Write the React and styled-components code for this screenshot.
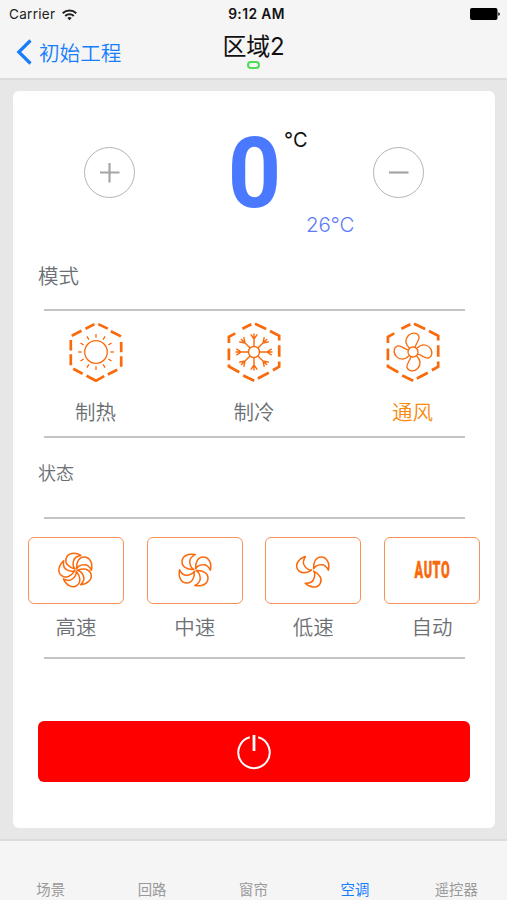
import React, {useState} from 'react';
import styled, {createGlobalStyle} from 'styled-components';

const GlobalStyle = createGlobalStyle`
  * {
    box-sizing: border-box;
  }
  body {
    margin: 0;
    background: #e7e7e7;
    font-family: Inter, "Noto Sans CJK SC", sans-serif;
  }
  button {
    padding: 0;
    border: none;
    background: none;
    font: inherit;
    cursor: pointer;
  }
  svg {
    display: block;
  }
`;

const Screen = styled.div`
  display: flex;
  flex-direction: column;
  width: 507px;
  height: 900px;
  overflow: hidden;
`;

const Header = styled.header`
  height: 80px;
  background: #f5f5f5;
  border-bottom: 2px solid #dcdcdc;
`;

const StatusBar = styled.div`
  display: grid;
  grid-template-columns: 1fr auto 1fr;
  align-items: center;
  height: 27px;
  padding: 0 7px 0 9px;
  font-size: 13.5px;
  line-height: 27px;
  color: #222;
`;

const Carrier = styled.div`
  display: flex;
  align-items: center;
  gap: 7px;
  padding-top: 1px;
  letter-spacing: .3px;
`;

const Clock = styled.div`
  padding: 1px 0 0 4px;
  font-weight: 600;
  font-size: 13.8px;
  letter-spacing: .4px;
  color: #111;
`;

const Battery = styled.svg`
  justify-self: end;
`;

const NavBar = styled.nav`
  display: grid;
  grid-template-columns: 1fr auto 1fr;
  height: 51px;
  padding: 0 16px;
`;

const Back = styled.button`
  display: flex;
  align-items: center;
  gap: 7px;
  height: 50px;
  font-family: "Noto Sans CJK SC", sans-serif;
  font-size: 20.6px;
  font-weight: 350;
  color: #157efb;
`;

const Title = styled.h1`
  display: flex;
  flex-direction: column;
  align-items: center;
  gap: 0;
  margin: 5px 0 0;
  font-size: 24px;
  font-weight: 400;
  line-height: 29px;
  letter-spacing: -.2px;
  color: #111;
`;

const OnlineMark = styled.span`
  width: 13px;
  height: 8px;
  border: 2px solid #4cdd54;
  border-radius: 4px;
`;

const Card = styled.main`
  display: flex;
  flex-direction: column;
  height: 737px;
  margin: 11px 12px 11px 13px;
  background: #fff;
  border-radius: 6px;
`;

const Temperature = styled.section`
  display: grid;
  grid-template-columns: 51px 1fr 51px;
  align-items: start;
  height: 156px;
  padding: 0 71px;
`;

const RoundButton = styled.button`
  display: flex;
  align-items: center;
  justify-content: center;
  width: 51px;
  height: 51px;
  margin-top: 56px;
  border: 1.5px solid #b4b4b4;
  border-radius: 50%;
`;

const Reading = styled.div`
  display: grid;
  grid-template-columns: 57px auto;
  justify-content: start;
  padding: 30px 0 0 91px;
`;

const Current = styled.div`
  height: 90px;
  font-family: Roboto, sans-serif;
  font-size: 99px;
  font-weight: 700;
  line-height: 104px;
  text-align: center;
  color: #4a78ff;
  transform: scaleX(.94);
`;

const Unit = styled.div`
  padding: 5px 0 0 1px;
  font-size: 20px;
  line-height: 28px;
  color: #111;
`;

const Target = styled.div`
  grid-column: 1 / -1;
  padding-left: 80px;
  font-size: 20.5px;
  font-weight: 300;
  line-height: 28px;
  letter-spacing: -.2px;
  color: #5b7cf5;
`;

const SectionTitle = styled.h2`
  margin: 0;
  padding: ${props => props.$pad};
  font-size: ${props => props.$size};
  font-weight: 350;
  line-height: 30px;
  font-family: "Noto Sans CJK SC", sans-serif;
  color: #6c7074;
`;

const Modes = styled.section`
  display: grid;
  grid-template-columns: repeat(3, 104px);
  justify-content: space-between;
  height: 129px;
  margin: 0 30.5px;
  padding-top: 11px;
  border-top: 2px solid #c4c4c4;
  border-bottom: 2px solid #c4c4c4;
`;

const Option = styled.button`
  display: flex;
  flex-direction: column;
  align-items: center;
  height: fit-content;
`;

const Label = styled.span`
  font-family: "Noto Sans CJK SC", sans-serif;
  font-size: 20.5px;
  font-weight: 350;
  line-height: 30px;
  color: ${props => props.$active ? '#f98a0e' : '#6c7074'};
`;

const ModeLabel = styled(Label)`
  margin-top: 14px;
`;

const Divider = styled.hr`
  width: 421px;
  height: 2px;
  margin: 0 0 0 30.5px;
  border: none;
  background: #c4c4c4;
`;

const Speeds = styled.section`
  display: grid;
  grid-template-columns: repeat(4, 96px);
  justify-content: space-between;
  height: 138px;
  padding: 18px 15px 0;
`;

const SpeedBox = styled.span`
  display: flex;
  align-items: center;
  justify-content: center;
  width: 96px;
  height: 67px;
  padding-bottom: 2px;
  margin-bottom: 7px;
  border: 1.5px solid #f9915a;
  border-radius: 6px;
`;

const Auto = styled.span`
  padding-top: 2px;
  font-family: Roboto, sans-serif;
  font-size: 23px;
  font-weight: 900;
  line-height: 30px;
  letter-spacing: 1px;
  color: #f96a0c;
  -webkit-text-stroke: .4px #f96a0c;
  transform: scaleX(.55);
`;

const Power = styled.button`
  display: flex;
  align-items: center;
  justify-content: center;
  height: 61px;
  margin: 62px 25px 0;
  background: #fe0000;
  border-radius: 6px;
`;

const TabBar = styled.footer`
  display: grid;
  grid-template-columns: repeat(5, 1fr);
  height: 61px;
  background: #f5f5f5;
  border-top: 2px solid #dcdcdc;
`;

const Tab = styled.button`
  padding: 39px 0 0;
  font-size: 14.4px;
  line-height: 20px;
  color: ${props => props.$active ? '#157efb' : '#999'};
`;

const ORANGE = '#f96a0c';

const range = n => Array.from({length: n}, (_, i) => i);

const WifiIcon = () => (
  <svg width="15" height="12" viewBox="0 0 15 12" fill="none" stroke="#222" strokeWidth="1.9">
    <path d="M.7 4.2a9.8 9.8 0 0 1 13.6 0"/>
    <path d="M3.2 7a6.2 6.2 0 0 1 8.6 0"/>
    <path d="M7.5 11.2 5.3 9a3.2 3.2 0 0 1 4.4 0z" fill="#222" stroke="none"/>
  </svg>
);

const BatteryIcon = () => (
  <Battery width="30" height="12" viewBox="0 0 30 12">
    <rect x="0" y="0" width="27.5" height="12" rx="2"/>
    <path d="M28.3 4.2q1.6.4 1.6 1.8t-1.6 1.8z"/>
  </Battery>
);

const SunFigure = () => (
  <g strokeWidth="1.3">
    <circle r="11.3"/>
    {range(12).map(i => <path key={i} d="M0-14.3v-3.7" transform={`rotate(${i * 30})`}/>)}
  </g>
);

const SnowFigure = () => (
  <g strokeWidth="1.4">
    <circle r="5.5"/>
    {range(8).map(i => (
      <path key={i} d="M0-5.5v-13M0-12.8l-3.2-4.9M0-12.8l3.2-4.9" transform={`rotate(${i * 45})`}/>
    ))}
  </g>
);

const FanFigure = () => (
  <g strokeWidth="1.3">
    <circle r="5"/>
    {range(4).map(i => (
      <path
        key={i}
        d="M-3.6-3.8C-8-8.5-8.4-12.5-4.6-16.5-1-20.2 4.6-19.3 6-15.6 7-11.6 3-9.4 2.2-4.8"
        transform={`rotate(${i * 90})`}
      />
    ))}
  </g>
);

const frames = {
  plain: 'M5.8 13.8 15.5 8.8M19.5 6.7l9-4.6M32.2 2.1l9.6 4.5M44.8 9.2l10.2 5.2M55.2 20v10.2M55.2 34.2v10.6M4.8 18v10.4M4.8 32.2v11M7.2 46.8l9.4 5M20.5 53.8l9.4 5 8.3-4.7M41.8 52.5l9.4-4.7',
  corner: 'M4.9 21v-6.2l6.4-3.4M18.4 6.7l9-4.4M31 1.8l11.2 5.2M46 9l9.2 4.8V18.6M55.2 23.2v11.6M55.2 39.4v5.4l-6.3 3.4M44.8 50.8l-11 5.7M30.2 58.7 19.2 53.5M15.3 50.2 4.9 44.4V42.6M4.9 26.5v11.7',
};

const HexIcon = ({frame, children}) => (
  <svg width="60" height="60" viewBox="0 0 60 60" fill="none" stroke={ORANGE}>
    <path d={frames[frame]} strokeWidth="2.7"/>
    <g transform="translate(30 30)">{children}</g>
  </svg>
);

const BladesIcon = ({count}) => (
  <svg width="38" height="38" viewBox="-19 -19 38 38" fill="none" stroke={ORANGE} strokeWidth="1.5" strokeLinejoin="round">
    {range(count).map(i => (
      <path
        key={i}
        d="M.6-1.2C.2-8 3-13 8.2-13 13.8-13 17-7 15.4.2 13.6-3.4 11-5.6 7.8-5.2 4.6-5 2-3.6.6-1.2z"
        transform={`rotate(${i * -360 / count})`}
      />
    ))}
  </svg>
);

const PowerIcon = () => (
  <svg width="36" height="36" viewBox="0 0 36 36" fill="none" stroke="#fff" strokeWidth="2">
    <path d="M13.8 3.3a15.7 15.7 0 1 0 8.4 0"/>
    <path d="M18 1v16" strokeWidth="2.8"/>
  </svg>
);

const modes = [
  {name: '制热', frame: 'plain', Figure: SunFigure},
  {name: '制冷', frame: 'corner', Figure: SnowFigure},
  {name: '通风', frame: 'corner', Figure: FanFigure},
];

const speeds = [
  {name: '高速', blades: 5},
  {name: '中速', blades: 4},
  {name: '低速', blades: 3},
  {name: '自动'},
];

const tabs = ['场景', '回路', '窗帘', '空调', '遥控器'];

const App = () => {
  const [mode, setMode] = useState('通风');
  const [tab, setTab] = useState('空调');
  const [target, setTarget] = useState(26);

  return (
    <Screen>
      <GlobalStyle/>
      <Header>
        <StatusBar>
          <Carrier>Carrier <WifiIcon/></Carrier>
          <Clock>9:12 AM</Clock>
          <BatteryIcon/>
        </StatusBar>
        <NavBar>
          <Back>
            <svg width="16" height="26" viewBox="0 0 16 26" fill="none" stroke="#157efb" strokeWidth="3.2">
              <path d="M14.5 1.5 2.8 13l11.7 11.5"/>
            </svg>
            初始工程
          </Back>
          <Title>区域2<OnlineMark/></Title>
        </NavBar>
      </Header>
      <Card>
        <Temperature>
          <RoundButton onClick={() => setTarget(target + 1)}>
            <svg width="20" height="20" viewBox="0 0 20 20" stroke="#a6a6a6" strokeWidth="2.2">
              <path d="M0 9.5h19.5M9.5 0v19.5"/>
            </svg>
          </RoundButton>
          <Reading>
            <Current>0</Current>
            <Unit>°C</Unit>
            <Target>{target}°C</Target>
          </Reading>
          <RoundButton onClick={() => setTarget(target - 1)}>
            <svg width="20" height="20" viewBox="0 0 20 20" stroke="#a6a6a6" strokeWidth="2.2">
              <path d="M0 9.5h19.5"/>
            </svg>
          </RoundButton>
        </Temperature>
        <SectionTitle $size="20.5px" $pad="13px 25px 19px">模式</SectionTitle>
        <Modes>
          {modes.map(({name, frame, Figure}) => (
            <Option key={name} onClick={() => setMode(name)}>
              <HexIcon frame={frame}><Figure/></HexIcon>
              <ModeLabel $active={name === mode}>{name}</ModeLabel>
            </Option>
          ))}
        </Modes>
        <SectionTitle $size="18px" $pad="19px 25px 30px">状态</SectionTitle>
        <Divider/>
        <Speeds>
          {speeds.map(({name, blades}) => (
            <Option key={name}>
              <SpeedBox>{blades ? <BladesIcon count={blades}/> : <Auto>AUTO</Auto>}</SpeedBox>
              <Label>{name}</Label>
            </Option>
          ))}
        </Speeds>
        <Divider/>
        <Power><PowerIcon/></Power>
      </Card>
      <TabBar>
        {tabs.map(name => (
          <Tab key={name} $active={name === tab} onClick={() => setTab(name)}>{name}</Tab>
        ))}
      </TabBar>
    </Screen>
  )
};

export default App;
